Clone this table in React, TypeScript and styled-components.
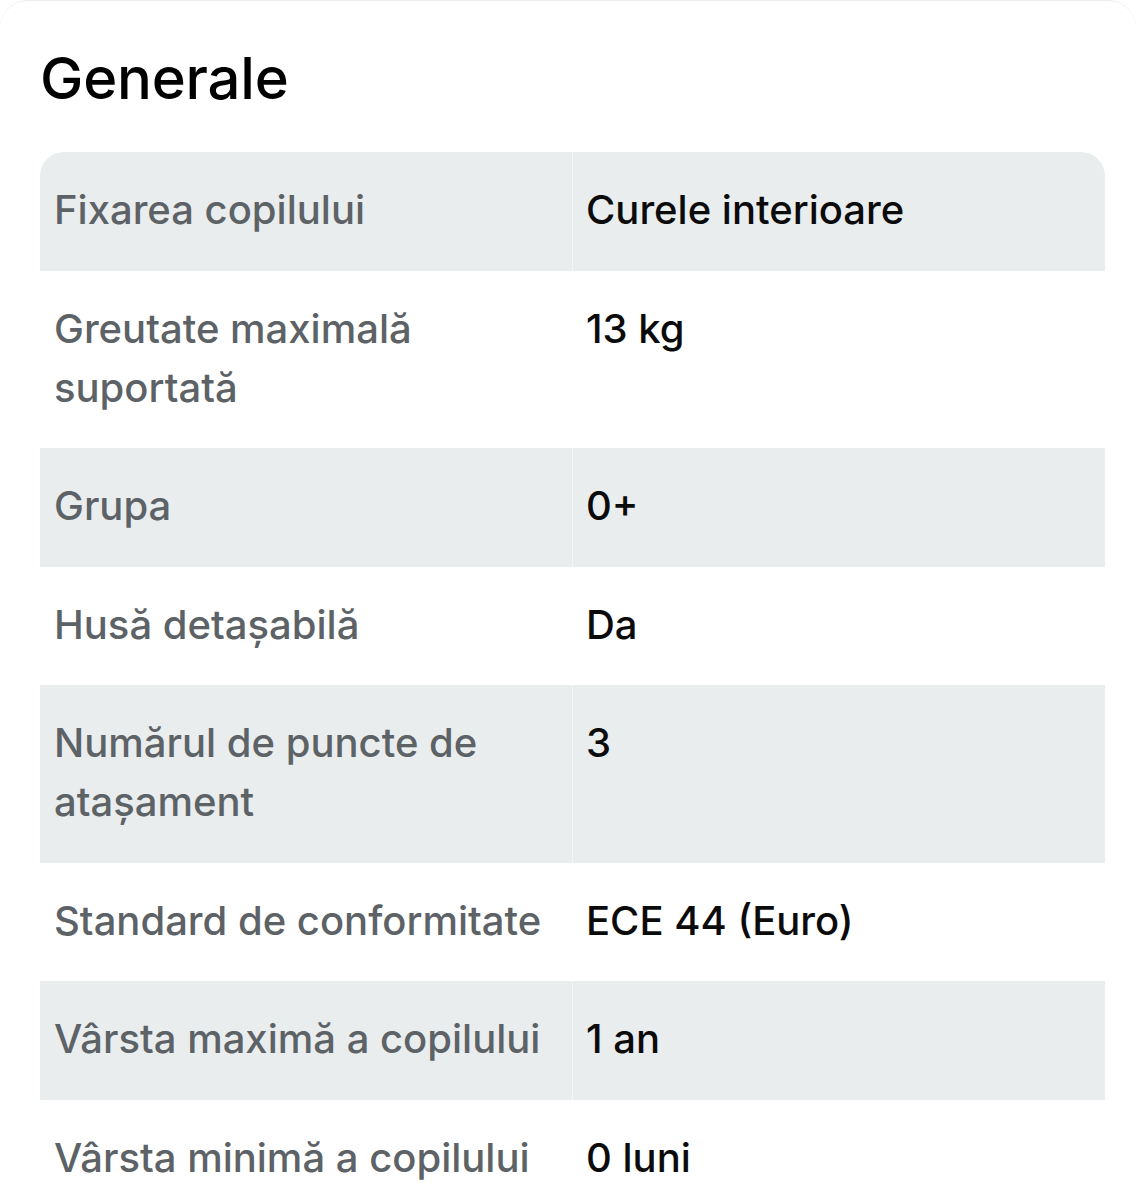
import React from "react";
import styled, { createGlobalStyle } from "styled-components";

const Global = createGlobalStyle`
  html, body { margin: 0; padding: 0; background: #ffffff; }
  body { font-family: Inter, "Noto Sans", sans-serif; -webkit-font-smoothing: antialiased; }
`;

const Card = styled.section`
  box-sizing: border-box;
  width: 1136px;
  min-height: 1200px;
  border-top: 1px solid #ececec;
  border-radius: 28px 28px 0 0;
  padding: 0 31px 0 40px;
  background: #fff;
`;

const Title = styled.h2`
  margin: 0;
  padding-top: 42px;
  height: 151px;
  box-sizing: border-box;
  font-size: 58px;
  line-height: 70px;
  font-weight: 500;
  color: #000;
  letter-spacing: -0.2px;
`;

const Table = styled.div`
  display: grid;
  grid-template-columns: 532px 1fr;
  border-radius: 24px 24px 0 0;
  overflow: hidden;
`;

const Cell = styled.div<{ $shaded: boolean; $value?: boolean }>`
  background: ${(p) => (p.$shaded ? "#e9edee" : "#ffffff")};
  padding: 28px 15px 31.5px ${(p) => (p.$value ? "13px" : "14px")};
  font-size: 40px;
  line-height: 59px;
  color: ${(p) => (p.$value ? "#0b0b0b" : "#5d6266")};
  font-weight: 450;
  border-left: ${(p) => (p.$value ? "1px solid rgba(255,255,255,0.55)" : "none")};
`;

const rows: [string, string][] = [
  ["Fixarea copilului", "Curele interioare"],
  ["Greutate maximală suportată", "13 kg"],
  ["Grupa", "0+"],
  ["Husă detașabilă", "Da"],
  ["Numărul de puncte de atașament", "3"],
  ["Standard de conformitate", "ECE 44 (Euro)"],
  ["Vârsta maximă a copilului", "1 an"],
  ["Vârsta minimă a copilului", "0 luni"],
];

export default function App() {
  return (
    <>
      <Global />
      <Card>
        <Title>Generale</Title>
        <Table>
          {rows.map(([label, value], i) => (
            <React.Fragment key={label}>
              <Cell $shaded={i % 2 === 0}>{label}</Cell>
              <Cell $shaded={i % 2 === 0} $value>
                {value}
              </Cell>
            </React.Fragment>
          ))}
        </Table>
      </Card>
    </>
  );
}
